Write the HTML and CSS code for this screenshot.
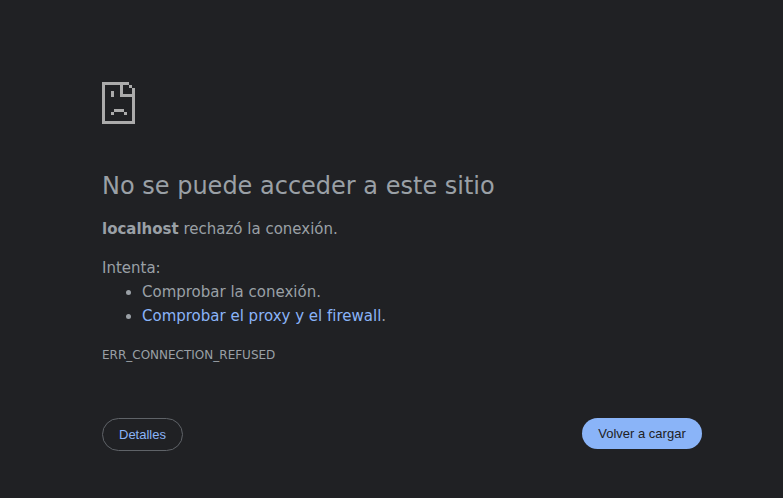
FILE: index.html
```
<!DOCTYPE html>
<html lang="es">
<head>
<meta charset="utf-8">
<meta name="viewport" content="width=device-width, initial-scale=1">
<title>localhost</title>
<link rel="stylesheet" href="styles.css">
</head>
<body>
<main class="error-page">
  <svg class="error-icon" viewBox="0 0 33 42" shape-rendering="crispEdges" aria-hidden="true">
    <path d="M0 0H27V3H30V6H33V42H0ZM3 3V39H30V15H18V3ZM21 3V12H30V6H27V3Z" fill-rule="evenodd"/>
    <path d="M9 9H12V15H9ZM12 27H22V30H12ZM9 30H12V33H9ZM22 30H25V33H22Z"/>
  </svg>
  <h1 class="title">No se puede acceder a este sitio</h1>
  <p class="message"><strong>localhost</strong> rechazó la conexión.</p>
  <div class="suggestions">
    <p class="suggestions-label">Intenta:</p>
    <ul class="suggestions-list">
      <li>Comprobar la conexión.</li>
      <li><a class="link" href="#buttons">Comprobar el proxy y el firewall</a>.</li>
    </ul>
  </div>
  <p class="error-code">ERR_CONNECTION_REFUSED</p>
  <div class="buttons" id="buttons">
    <button class="button button-secondary" type="button">Detalles</button>
    <button class="button button-primary" type="button">Volver a cargar</button>
  </div>
</main>
</body>
</html>
```
FILE: styles.css
```
body {
  margin: 0;
  padding: 82px 0 0 21px;
  background: #202124;
  color: #9aa0a6;
  font-family: "DejaVu Sans", sans-serif;
  font-size: 15px;
  line-height: 24px;
}

.error-page {
  max-width: 600px;
  margin: 0 auto;
}

.error-icon {
  display: block;
  width: 33px;
  height: 42px;
  fill: #ababab;
}

.title {
  margin: 48px 0 17px;
  font-size: 24px;
  font-weight: 500;
  line-height: 28px;
}

.message,
.suggestions {
  margin: 0 0 15px;
}

.suggestions-label {
  margin: 0;
}

.suggestions-list {
  margin: 0;
  padding-left: 40px;
}

.link {
  color: #8ab4f8;
  text-decoration: none;
}

.error-code {
  margin: 0;
  font-size: 12px;
}

.buttons {
  display: flex;
  justify-content: space-between;
  align-items: flex-start;
  margin-top: 51px;
}

.button {
  padding: 8px 16px;
  border: 0;
  border-radius: 20px;
  font-family: "Liberation Sans", Arial, sans-serif;
  font-size: 13px;
  line-height: 15px;
  cursor: pointer;
}

.button-primary {
  min-width: 120px;
  background: #8ab4f8;
  color: #202124;
}

.button-secondary {
  border: 1px solid #5f6368;
  background: transparent;
  color: #8ab4f8;
}
```
